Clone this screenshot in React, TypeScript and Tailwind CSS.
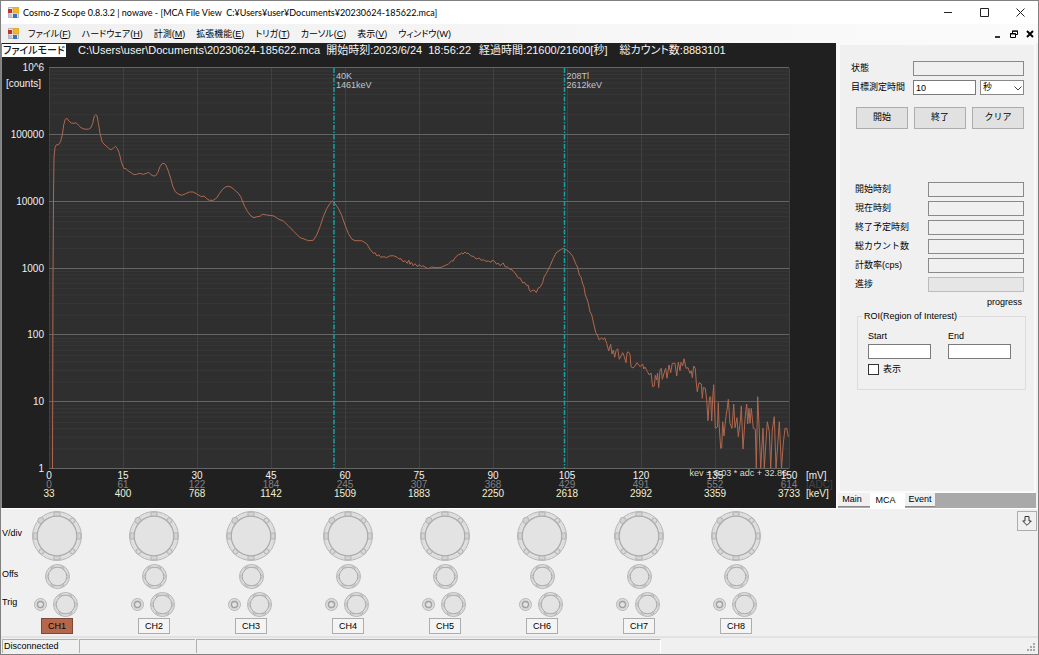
import { clsx } from 'clsx';

const menuItems = [
  { label: 'ファイル', key: 'F' },
  { label: 'ハードウェア', key: 'H' },
  { label: '計測', key: 'M' },
  { label: '拡張機能', key: 'E' },
  { label: 'トリガ', key: 'T' },
  { label: 'カーソル', key: 'C' },
  { label: '表示', key: 'V' },
  { label: 'ウィンドウ', key: 'W' },
];

const yLabels = ['10^6', '100000', '10000', '1000', '100', '10', '1'];

const xTicks = [
  { mv: '0', adc: '0', kev: '33' },
  { mv: '15', adc: '61', kev: '400' },
  { mv: '30', adc: '122', kev: '768' },
  { mv: '45', adc: '184', kev: '1142' },
  { mv: '60', adc: '245', kev: '1509' },
  { mv: '75', adc: '307', kev: '1883' },
  { mv: '90', adc: '368', kev: '2250' },
  { mv: '105', adc: '429', kev: '2618' },
  { mv: '120', adc: '491', kev: '2992' },
  { mv: '135', adc: '552', kev: '3359' },
  { mv: '150', adc: '614', kev: '3733' },
];

const cursors = [
  { x: 285, name: '40K', energy: '1461keV' },
  { x: 515.5, name: '208Tl', energy: '2612keV' },
];

const results = ['開始時刻', '現在時刻', '終了予定時刻', '総カウント数', '計数率(cps)'];

const channels = ['CH1', 'CH2', 'CH3', 'CH4', 'CH5', 'CH6', 'CH7', 'CH8'];

// plot area size and height of one decade
const PLOT_W = 740;
const PLOT_H = 401;
const DECADE = PLOT_H / 6;

const spectrum = [
  '3.5,401 4,210 4.5,128 5,89 6,79.5 7.5,76.7 9.5,76.7 11.5,73.7 13.3,67 14.7,57 16.3,51.3 18,50.3 20,53.3 22.3,55 25,55.3 27,54.7',
  '29.3,57 32,59.7 35,61 39.3,61.3 41.7,60 43.7,55.3 45.3,48 46.7,46.7 48,47.7 49.3,54.7 51,65.3 53.3,74.3 56,77 59.3,80 62,81.7',
  '64.3,80.3 66.3,78.3 68.3,80.3 70.3,85.3 72.3,93.7 74.7,100.3 77,100.7 79.3,103 82.7,105 85,106.7 87.7,106.3 90.3,105.3 94.3,106.3',
  '97.5,105.3 99.7,104.3 102,106.7 104.3,108 106.7,107.7 108.7,104.7 111,98.7 113,95.7 115.3,95.3 117.3,98 119.3,103 121.7,110.3',
  '123.7,118 126.3,123.7 129.3,126 132.7,127.3 136.7,125.7 140.3,124 144.3,124 148.3,126.3 152.7,128.7 155,128 157.7,130.7 160.3,132.3',
  '164.3,132.3 167.7,130 170.3,125.7 173.3,121.7 176.3,119 179.3,118.3 182,119 185.3,121.7 189.3,125.3 192,129.3 195,137 198.3,143.3',
  '202,148 205,149.7 208,148.7 211,148.3 213.3,146.3 217.7,147 225,148 229.3,151 234.3,153 239.3,157.7 244.3,163 251,169.5',
  '255,171 259.3,172.7 264.3,172.3 267.7,167 271,158.7 274.3,148.7 277.7,140.7 281,135.3 283.7,132.7 285.7,135.3 289.3,140.3 292.7,147.3',
  '296,157 299.3,165.3 302.7,171 306,172.7 312.7,172.7 317.7,175.7 321,181.3 324.3,185.3 326,184.7 328,188 330,186.7 331.7,189.3 335,188.7',
  '337.7,189.7 340.3,188 344.3,187.7 348.3,189.3 350,191 352,190.7 354,193.7 356,192.7 358.3,195.3 359.7,192 361,196.3 362.3,194.3',
  '364.3,197.7 366,195.7 368.5,198.7 370,196.7 372.7,198.7 374,197.7 376,199 379.3,200.7 382.7,199 386,199.7 391,199.7 394.3,198.3',
  '399.3,196 402.7,192.7 404,193.3 406,189.7 409.3,186.7 411,186.3 412.7,185 414,186 416,184 417.7,185.5 419,185 421.7,187.7 425,188.7',
  '427,191 428.3,190.7 430.3,190 432,192.3 434.3,191.7 437,193.3 439.3,193 442,194.3 443,192.3 445.3,193 447.7,196.3 449,195 451,197.7',
  '454.3,195 456,198.7 458.5,199 461,201.3 463,201.7 465,204.3 467,206 468.3,209 470,210.3 471,209.7 473.7,215 475.5,214.3 477.7,217.7',
  '479,217 480.3,222 481.7,223.7 484,222 486,222.7 487.3,224.7 489,220.3 491,219.3 493.7,214.7 495,209 497,206 501,198 504.3,190.3',
  '507,185 511,182 514.3,180.3 517,181.7 520.3,184 523.7,188.3 527,196.3 528.5,199 530.3,207 532,209 533.7,216 535,219 536.3,227',
  '538,231 539.3,235.3 541,244 542.5,246 544.3,254 546.7,264.3 548.7,268 550.3,272 552.7,269.7 554.3,271.7 555.7,269.7 557.7,275.3',
  '559.7,283 561.7,276.3 563,286 564.3,282 565.7,289.3 567,282.7 568.7,280.7 570.3,291.3 572,288 573.7,284.7 575.3,288.7 577,294.7',
  '578,285 579,283.7 581,286 582,298.7 584,300 585.7,298.5 588,294.7 591,298.7 593.7,296 594.7,301 596,299 598.3,303.5 600.3,307',
  '602,305 603.7,318.7 605.3,318 606.3,307.3 607.7,312 608.5,305 609.7,319.7 611,302 612.3,300.3 613.3,311.3 615.7,303 616.7,300.3',
  '618,310.3 620,297 621.7,304.7 623.3,295.3 626,295.3 627.7,308 629.3,294 631,302.7 632,294.3 633.7,298 635,290.7 637,300.3 639,299.7',
  '641,305.3 642.3,302.7 643.3,309.7 644.7,298 646.3,300.3 647.3,315 648.3,323.7 650,314.7 652.3,316 653.3,330.3 654.3,319.3 656.3,320.3',
  '657.7,332 659,352.7 660.5,329.3 661.7,328.7 662.7,353 663.7,330 664.7,316.7 666.3,360.3 668.5,359 669.3,334.7 670,355.3 671.7,380.3',
  '672.7,380 673.7,353.7 675,368 676,357 677,348.7 678.3,340 679.3,331.3 681,355.3 683,360.3 684.7,336 686,359.7 688,349.7 689.3,368.7',
  '691.3,353.7 692.3,338 694,381 696.3,347.7 697.7,336 698.7,356 700,340.3 701,355.3 702.3,340.3 704.3,360.3 706.3,361.3 707.3,400',
  '708.7,328.7 710,357 711.7,400 714,360.3 715.3,400 716.7,378 718.3,353.7 720.3,363.7 721.7,400 723.3,362 725.3,348.7 727,400',
  '728.5,380 730.3,353.7 732.5,400 734.3,375.3 736,360.3 737.7,360.3 739.3,368.7',
].join(' ');

function AppIcon() {
  return (
    <svg viewBox="0 0 11 11" className="h-[11px] w-[11px] shrink-0" aria-hidden="true">
      <rect x="0.5" y="0.5" width="10" height="10" fill="#e8e8e8" stroke="#b8b8b8" />
      <rect x="0" y="2" width="4" height="4" fill="#c4342d" />
      <rect x="5" y="0" width="6" height="6" fill="#f3b52c" stroke="#d99a1c" strokeWidth="0.6" />
      <rect x="1" y="7" width="3" height="3" fill="#b9c4d4" />
      <rect x="5" y="7" width="4" height="4" fill="#3c6fc4" />
    </svg>
  );
}

function TitleBar() {
  return (
    <header className="flex h-[23px] items-center bg-white pl-[7px] text-black">
      <AppIcon />
      <h1 className="ml-1 flex-1 whitespace-pre font-[Lato,'Noto_Sans_CJK_JP',sans-serif]">
        {'Cosmo-Z Scope 0.8.3.2 | nowave - [MCA File View  C:¥Users¥user¥Documents¥20230624-185622.mca]'}
      </h1>
      <button aria-label="Minimize" className="flex w-9 justify-center">
        <svg viewBox="0 0 9 9" className="h-[9px] w-[9px]" stroke="#222" fill="none"><path d="M0 4.5H8" /></svg>
      </button>
      <button aria-label="Maximize" className="flex w-9 justify-center">
        <svg viewBox="0 0 9 9" className="h-[9px] w-[9px]" stroke="#222" fill="none"><path d="M0.5 0.5H8.5V8.5H0.5Z" /></svg>
      </button>
      <button aria-label="Close" className="flex w-9 justify-center">
        <svg viewBox="0 0 9 9" className="h-[9px] w-[9px]" stroke="#222" fill="none"><path d="M0.5 0.5L8.5 8.5M8.5 0.5L0.5 8.5" /></svg>
      </button>
    </header>
  );
}

function MenuBar() {
  return (
    <nav className="flex h-[19px] items-center bg-gradient-to-r from-[#f0f0f0] to-[#fbfbfb] pl-[7px] pr-1">
      <AppIcon />
      <div className="ml-[9px] flex flex-1 gap-[11px] leading-4">
        {menuItems.map((item) => (
          <button key={item.key} className="whitespace-nowrap [font-feature-settings:'palt']">
            {item.label}(<span className={clsx(item.key !== 'W' && 'underline')}>{item.key}</span>)
          </button>
        ))}
      </div>
      <div className="flex gap-2">
        <button aria-label="Minimize child window">
          <svg viewBox="0 0 8 8" className="h-2 w-2"><path d="M1 7H6" stroke="#000" strokeWidth="1.6" /></svg>
        </button>
        <button aria-label="Restore child window">
          <svg viewBox="0 0 8 8" className="h-2 w-2" fill="none" stroke="#000">
            <path d="M2.5 3V1H7.5V4.5H6M2 1.2H8" />
            <path d="M0.5 3.5H5.5V7.5H0.5ZM0 4H6" />
          </svg>
        </button>
        <button aria-label="Close child window">
          <svg viewBox="0 0 8 8" className="h-2 w-2"><path d="M1 1L7 7M7 1L1 7" stroke="#000" strokeWidth="1.9" /></svg>
        </button>
      </div>
    </nav>
  );
}

function Spectrum() {
  const minor = [];
  for (let d = 0; d < 6; d++) {
    for (let n = 2; n < 10; n++) {
      minor.push(PLOT_H - (d + Math.log10(n)) * DECADE);
    }
  }

  return (
    <svg viewBox="0 0 834 450" className="block w-full text-[10px]" role="img" aria-label="MCA spectrum">
      <g transform="translate(47 10)">
        <rect width={PLOT_W} height={PLOT_H} fill="#2f2f2f" />
        {minor.map((y) => (
          <line key={y} x1="0" x2={PLOT_W} y1={y} y2={y} stroke="#383838" />
        ))}
        {xTicks.map((t, i) => (
          <line key={t.mv} x1={i * 74 + 0.5} x2={i * 74 + 0.5} y1="0" y2={PLOT_H} stroke="#404040" />
        ))}
        {yLabels.map((label, i) => (
          <line key={label} x1="0" x2={PLOT_W} y1={Math.round(i * DECADE) - 0.5} y2={Math.round(i * DECADE) - 0.5} stroke="#656565" />
        ))}

        <polyline points={spectrum} fill="none" stroke="#b0684f" strokeWidth="1" strokeLinejoin="round" />

        {cursors.map((c) => (
          <g key={c.name}>
            <line x1={c.x} x2={c.x} y1="0" y2={PLOT_H} stroke="#16a3a3" strokeWidth="1.5" strokeDasharray="5 1.5 1.5 1.5" />
            <text x={c.x + 2} y="11" fill="#c4c4c4" fontSize="9">{c.name}</text>
            <text x={c.x + 2} y="20" fill="#c4c4c4" fontSize="9">{c.energy}</text>
          </g>
        ))}

        <g fill="#f0f0f0" textAnchor="end">
          {yLabels.map((label, i) => (
            <text key={label} x="-5" y={Math.round(i * DECADE) + 3}>{label}</text>
          ))}
          <text x="-8" y="19">[counts]</text>
        </g>

        <text x="738" y="408" textAnchor="end" fontSize="9" fill="#dcdcc0">kev = 6.03 * adc + 32.86</text>

        <g textAnchor="middle">
          {xTicks.map((t, i) => (
            <g key={t.kev}>
              <text x={i * 74} y="420" fill="#808080">{t.adc}</text>
              <text x={i * 74} y="411" fill="#f0f0f0">{t.mv}</text>
              <text x={i * 74} y="429" fill="#f0f0d0">{t.kev}</text>
            </g>
          ))}
        </g>
        <text x="757" y="420" fill="#444">[ADC]</text>
        <text x="757" y="411" fill="#f0f0f0">[mV]</text>
        <text x="757" y="429" fill="#f0f0d0">[keV]</text>
      </g>
    </svg>
  );
}

function ChartPane() {
  return (
    <section className="min-w-0 flex-1 border-l border-[#8a8a8a] bg-[#202020]">
      <div className="flex h-[15px] items-center whitespace-pre text-[11px] leading-[13px] text-[#f4f4f4] [font-feature-settings:'palt']">
        <span className="min-w-16 bg-white px-px text-[10px] font-medium text-[#101828]">ファイルモード</span>
        <span className="ml-3">C:\Users\user\Documents\20230624-185622.mca</span>
        <span className="ml-1.5">{'開始時刻:2023/6/24  18:56:22'}</span>
        <span className="ml-2">経過時間:21600/21600[秒]</span>
        <span className="ml-3">総カウント数:8883101</span>
      </div>
      <Spectrum />
    </section>
  );
}

function SidePanel() {
  return (
    <aside className="flex w-[202px] shrink-0 flex-col border-l-2 border-[#f8f8f8] pr-0.5">
      <div className="flex-1 border-2 border-[#fafafa] bg-[#f0f0f0] pl-[11px] pr-2.5 pt-4">
        <div className="flex h-[15px] items-center">
          <label htmlFor="status" className="w-[62px]">状態</label>
          <input id="status" readOnly className="h-[15px] min-w-0 flex-1 border border-[#8a8a8a] bg-[#f0f0f0] px-0.5" />
        </div>
        <div className="mt-1 flex h-[15px] items-center">
          <label htmlFor="target" className="w-[62px] whitespace-nowrap">目標測定時間</label>
          <input id="target" defaultValue="10" className="h-[15px] w-[63px] border border-[#7a7a7a] bg-white px-0.5" />
          <div className="relative ml-1 flex-1">
            <select aria-label="時間単位" className="block h-[15px] w-full appearance-none border border-[#8a8a8a] bg-white px-0.5">
              <option>秒</option>
            </select>
            <svg viewBox="0 0 8 5" className="pointer-events-none absolute right-0.5 top-1.5 h-[5px] w-2" fill="none" stroke="#444">
              <path d="M0.5 0.5L4 4L7.5 0.5" />
            </svg>
          </div>
        </div>

        <div className="mt-3 flex gap-1.5 pl-[5px]">
          {['開始', '終了', 'クリア'].map((label) => (
            <button key={label} className="h-[22px] flex-1 border border-[#adadad] bg-[#e1e1e1]">{label}</button>
          ))}
        </div>

        <div className="mt-[53px] flex flex-col gap-1 pl-1">
          {results.map((label, i) => (
            <div key={label} className="flex h-[15px] items-center">
              <label htmlFor={`result-${i}`} className="w-[73px] whitespace-nowrap">{label}</label>
              <input id={`result-${i}`} readOnly className="h-[15px] min-w-0 flex-1 border border-[#8a8a8a] bg-[#f0f0f0] px-0.5" />
            </div>
          ))}
          <div className="flex h-[15px] items-center">
            <span className="w-[73px]">進捗</span>
            <div role="progressbar" aria-label="進捗" className="h-[15px] flex-1 border border-[#bcbcbc] bg-[#e6e6e6]" />
          </div>
        </div>
        <p className="mt-1 pr-0.5 text-right leading-3">progress</p>

        <fieldset className="-mr-0.5 ml-1.5 mt-0.5 h-20 border border-[#dcdcdc] pl-2.5">
          <legend className="-ml-1.5 px-0.5 leading-3">ROI(Region of Interest)</legend>
          <div className="mt-2 flex gap-[17px]">
            <label className="leading-3">
              Start
              <input className="mt-0.5 block h-[15px] w-[63px] border border-[#7a7a7a] bg-white px-0.5" />
            </label>
            <label className="leading-3">
              End
              <input className="mt-0.5 block h-[15px] w-[63px] border border-[#7a7a7a] bg-white px-0.5" />
            </label>
          </div>
          <label className="mt-1 flex items-center gap-1 leading-3">
            <input type="checkbox" className="h-[11px] w-[11px] appearance-none border border-[#333] bg-white checked:bg-[#333]" />
            表示
          </label>
        </fieldset>
      </div>

      <div role="tablist" className="flex h-[15px] items-start bg-[#a9a9a9]">
        <button role="tab" className="h-3.5 w-8 border-b border-[#8a8a8a] bg-[#f0f0f0] pb-0.5 pr-1 leading-3">Main</button>
        <button role="tab" aria-selected="true" className="h-[15px] w-[35px] bg-white pr-1 leading-[15px]">MCA</button>
        <button role="tab" className="h-3.5 w-[30px] border-b border-[#8a8a8a] bg-[#f0f0f0] pb-0.5 leading-3">Event</button>
      </div>
    </aside>
  );
}

function BigKnob({ label }: { label: string }) {
  return (
    <button aria-label={label} className="h-[50px] w-[50px]">
      <svg viewBox="-25 -25 50 50" fill="#e3e3e3" stroke="#b4b4b4">
        <circle r="24.4" />
        <circle r="22.6" fill="none" stroke="#d2d2d2" strokeWidth="0.7" />
        {[0, 90, 180, 270].map((a) => (
          <rect key={a} x="-3" y="-23.8" width="6" height="4.5" fill="#d4d4d4" transform={`rotate(${a})`} />
        ))}
        {[45, 135, 225].map((a) => (
          <circle key={a} cy="-21.8" r="2.5" fill="#dadada" transform={`rotate(${a})`} />
        ))}
        <circle cx="-16" cy="-15.5" r="3.1" fill="#d2d2d2" />
        <circle r="19.8" stroke="#adadad" strokeWidth="1.3" />
      </svg>
    </button>
  );
}

function SmallKnob({ label }: { label: string }) {
  return (
    <button aria-label={label} className="h-[25px] w-[25px]">
      <svg viewBox="-12.5 -12.5 25 25" fill="#e3e3e3" stroke="#b4b4b4">
        <circle r="12" />
        <circle r="10.7" fill="none" stroke="#cfcfcf" strokeWidth="0.6" />
        {[30, 90, 150, 210, 270, 330].map((a) => (
          <path key={a} d="M-2 -9.6L0 -11.2L2 -9.6" fill="none" transform={`rotate(${a})`} />
        ))}
        <circle r="9.3" stroke="#a8a8a8" />
      </svg>
    </button>
  );
}

function TinyKnob({ label }: { label: string }) {
  return (
    <button aria-label={label} className="h-[13px] w-[13px]">
      <svg viewBox="-6.5 -6.5 13 13" fill="#e3e3e3" stroke="#b4b4b4">
        <circle r="6" />
        <circle r="4.4" fill="none" stroke="#c8c8c8" strokeWidth="0.7" />
        <circle r="3" stroke="#a0a0a0" strokeWidth="1.3" />
      </svg>
    </button>
  );
}

function ChannelPanel() {
  return (
    <section className="flex flex-1 items-start border-t border-white bg-[#f0f0f0] pt-0.5">
      <div className="flex w-[31px] flex-col pl-px">
        <span className="h-[50px] leading-[44px]">V/div</span>
        <span className="mt-[3px] h-[25px] leading-5">Offs</span>
        <span className="mt-[3px] h-[25px] leading-5">Trig</span>
      </div>
      <div className="flex flex-1 gap-[47px]">
        {channels.map((ch, i) => (
          <div key={ch} className="flex w-[50px] flex-col items-center">
            <BigKnob label={`${ch} V/div`} />
            <div className="mt-[3px] flex">
              <SmallKnob label={`${ch} offset`} />
            </div>
            <div className="mt-[3px] flex items-center gap-1.5 pr-0.5">
              <TinyKnob label={`${ch} trigger mode`} />
              <SmallKnob label={`${ch} trigger level`} />
            </div>
            <button
              className={clsx(
                'mt-px h-4 w-8 border leading-[14px]',
                i === 0 ? 'border-[#7d4a3a] bg-[#b5674c]' : 'border-[#adadad] bg-[#f4f4f4]'
              )}
            >
              {ch}
            </button>
          </div>
        ))}
      </div>
      <button aria-label="Collapse" className="mr-px flex h-5 w-5 items-center justify-center border border-[#adadad]">
        <svg viewBox="0 0 10 10" className="h-2.5 w-2.5" fill="none" stroke="#333">
          <path d="M3 0.5H7V5H9.3L5 9.3L0.7 5H3Z" />
        </svg>
      </button>
    </section>
  );
}

function StatusBar() {
  return (
    <footer className="flex h-[18px] items-start border-t-2 border-[#e2e2e2] bg-[#f0f0f0] pl-px pt-px">
      <span className="h-3.5 w-[76px] border-l border-t border-[#b0b0b0] pl-px leading-3">Disconnected</span>
      <span className="ml-px h-3.5 w-[116px] border-l border-t border-[#b0b0b0]" />
      <span className="ml-px h-3.5 w-[465px] border-l border-t border-r border-r-white border-[#b0b0b0]" />
      <svg viewBox="0 0 9 9" className="ml-auto mr-0.5 mt-1 h-[9px] w-[9px]" fill="#a8a8a8" aria-hidden="true">
        <path d="M6 0h2v2h-2zM3 3h2v2h-2zM6 3h2v2h-2zM0 6h2v2h-2zM3 6h2v2h-2zM6 6h2v2h-2z" />
      </svg>
    </footer>
  );
}

export default function App() {
  return (
    <main className="flex min-h-screen flex-col border border-[#808080] bg-[#f0f0f0] font-['Liberation_Sans','Noto_Sans_CJK_JP',sans-serif] text-[9px] text-black">
      <TitleBar />
      <MenuBar />
      <div className="flex">
        <ChartPane />
        <SidePanel />
      </div>
      <ChannelPanel />
      <StatusBar />
    </main>
  );
}
